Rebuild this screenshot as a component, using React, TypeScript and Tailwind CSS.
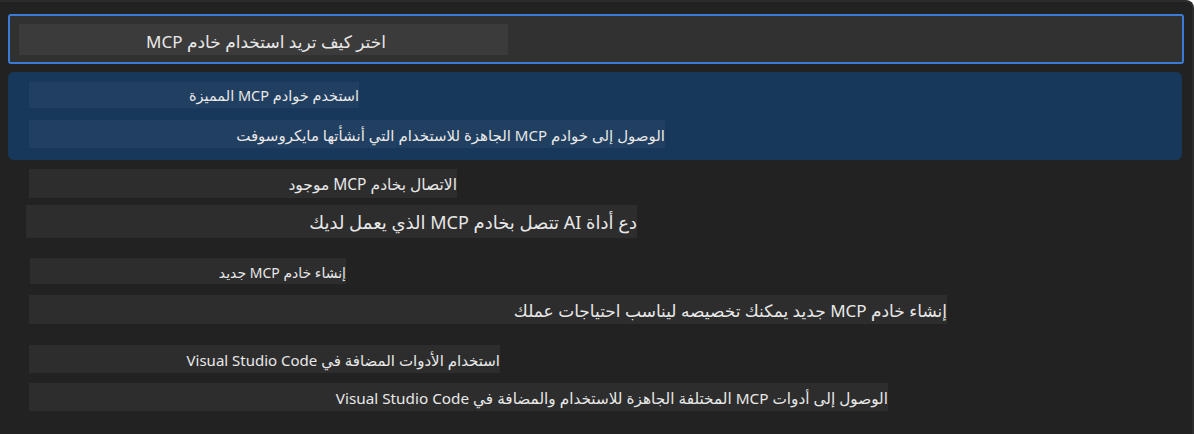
import React from 'react';

const font = { fontFamily: '"Noto Sans", "DejaVu Sans", sans-serif' };

function Box({ children, className }: { children: React.ReactNode; className: string }) {
  return (
    <div dir="rtl" className={`flex items-center text-right whitespace-nowrap text-[#e8e8e8] pt-[2px] ${className}`}>
      {children}
    </div>
  );
}

export default function App() {
  return (
    <div style={font} className="w-[1194px] h-[434px] bg-[#222222] border-t-2 border-r-2 border-[#2c2c2c] rounded-tr-lg overflow-hidden flex flex-col">
      {/* Search input */}
      <div className="mt-[12px] ml-[8px] w-[1176px] h-[50px] border-2 border-[#3a7bd5] rounded-[3px] bg-[#313131] pl-[9px] pt-[8px]">
        <Box className="w-[489px] h-[31px] bg-[#3b3b3b] text-[17px] pr-[122px] pt-[4px]">اختر كيف تريد استخدام خادم MCP</Box>
      </div>

      {/* Selected item */}
      <div className="mt-[8px] ml-[8px] w-[1174px] h-[88px] bg-[#17385b] rounded-md pl-[21px] pt-[10px] flex flex-col">
        <Box className="w-[330px] h-[26px] bg-[#213f61] text-[14.5px]">استخدم خوادم MCP المميزة</Box>
        <Box className="mt-[12px] w-[636px] h-[28px] bg-[#213f61] text-[15px]">الوصول إلى خوادم MCP الجاهزة للاستخدام التي أنشأتها مايكروسوفت</Box>
      </div>

      {/* Existing server */}
      <Box className="mt-[9px] ml-[29px] w-[428px] h-[29px] bg-[#2d2d2d] text-[15.5px]">الاتصال بخادم MCP موجود</Box>
      <Box className="mt-[7px] ml-[26px] w-[611px] h-[33px] bg-[#2d2d2d] text-[18px]">دع أداة AI تتصل بخادم MCP الذي يعمل لديك</Box>

      {/* New server */}
      <Box className="mt-[20px] ml-[30px] w-[316px] h-[26px] bg-[#2d2d2d] text-[14px]">إنشاء خادم MCP جديد</Box>
      <Box className="mt-[11px] ml-[29px] w-[918px] h-[29px] bg-[#2d2d2d] text-[17px]">إنشاء خادم MCP جديد يمكنك تخصيصه ليناسب احتياجات عملك</Box>

      {/* VS Code tools */}
      <Box className="mt-[21px] ml-[29px] w-[471px] h-[28px] bg-[#2d2d2d] text-[15px]">استخدام الأدوات المضافة في Visual Studio Code</Box>
      <Box className="mt-[10px] ml-[29px] w-[859px] h-[28px] bg-[#2d2d2d] text-[15.3px]">الوصول إلى أدوات MCP المختلفة الجاهزة للاستخدام والمضافة في Visual Studio Code</Box>
    </div>
  );
}
